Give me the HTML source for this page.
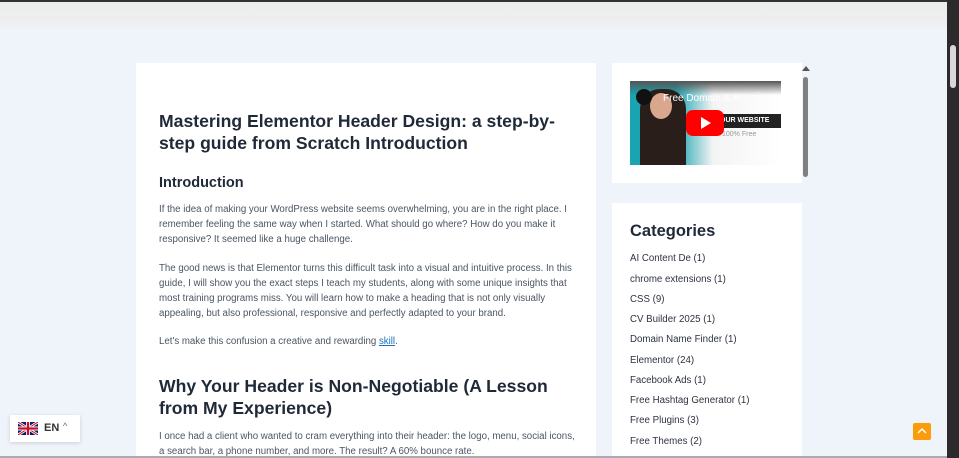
<!DOCTYPE html>
<html><head><meta charset="utf-8"><style>
*{margin:0;padding:0;box-sizing:border-box}
html,body{width:959px;height:458px;overflow:hidden}
body{background:#eff3fa;font-family:"Liberation Sans",sans-serif;position:relative}
.top{position:absolute;left:0;top:0;width:947px;height:30px;background:linear-gradient(#ececec,#eeeff1 80%,#eff3fa)}
.top:before{content:"";position:absolute;left:0;top:0;width:947px;height:2px;background:#333}
.sb{position:absolute;right:0;top:0;width:12px;height:458px;background:#2b2b2b}
.sb i{position:absolute;left:3px;top:45px;width:6px;height:43px;background:#d8d8d8;border-radius:3px}
.main{position:absolute;left:136px;top:63px;width:460px;height:395px;background:#fff;overflow:hidden}
.main .c{position:absolute;left:23px;width:420px;color:#1f2937}
h1{font-size:17.6px;line-height:22px;font-weight:bold}
h3{font-size:14.5px;font-weight:bold}
p{font-size:9.7px;line-height:15px;color:#4b5563}
a{color:#1a6fc0;text-decoration:underline}
.card{position:absolute;left:612px;width:190px;background:#fff;overflow:hidden}
.cat{position:absolute;left:18px;font-size:9.7px;color:#2d3340}
.lang{position:absolute;left:10px;top:415px;width:70px;height:27px;background:#fff;box-shadow:0 1px 4px rgba(0,0,0,.15);font-size:11px;font-weight:bold;color:#333}
.up{position:absolute;left:913px;top:423px;width:18px;height:17px;background:#fb9c0a;border-radius:2px}
</style></head><body>
<div class="top"></div>
<div class="main">
<div class="c" style="top:47px"><h1>Mastering Elementor Header Design: a step-by-step guide from Scratch Introduction</h1></div>
<div class="c" style="top:112px"><h3>Introduction</h3></div>
<div class="c" style="top:139px"><p>If the idea of making your WordPress website seems overwhelming, you are in the right place. I remember feeling the same way when I started. What should go where? How do you make it responsive? It seemed like a huge challenge.</p></div>
<div class="c" style="top:198px"><p>The good news is that Elementor turns this difficult task into a visual and intuitive process. In this guide, I will show you the exact steps I teach my students, along with some unique insights that most training programs miss. You will learn how to make a heading that is not only visually appealing, but also professional, responsive and perfectly adapted to your brand.</p></div>
<div class="c" style="top:271px"><p>Let's make this confusion a creative and rewarding <a>skill</a>.</p></div>
<div class="c" style="top:312px"><h1>Why Your Header is Non-Negotiable (A Lesson from My Experience)</h1></div>
<div class="c" style="top:366px"><p>I once had a client who wanted to cram everything into their header: the logo, menu, social icons, a search bar, a phone number, and more. The result? A 60% bounce rate.</p></div>
</div>
<div class="card" style="top:63px;height:120px">
<div style="position:absolute;left:18px;top:18px;width:151px;height:84px;background:linear-gradient(90deg,#1aa3b0 0,#1aa3b0 30%,#f4f4f4 55%,#fff);overflow:hidden">
<div style="position:absolute;left:0;top:0;width:151px;height:14px;background:linear-gradient(#555,rgba(0,0,0,0))"></div>
<div style="position:absolute;left:10px;top:8px;width:46px;height:76px;background:#2a1e1a;border-radius:20px 20px 0 0"></div>
<div style="position:absolute;left:20px;top:12px;width:22px;height:26px;background:#d9a78d;border-radius:50%"></div>
<div style="position:absolute;left:6px;top:8px;width:16px;height:16px;background:#111;border-radius:50%"></div>
<div style="position:absolute;left:33px;top:12px;color:#fff;font-size:10px">Free Domain &amp; H...</div>
<div style="position:absolute;left:123px;top:10px;color:#fff;font-size:10px">⋮</div>
<div style="position:absolute;left:84px;top:33px;width:67px;height:14px;background:#222;color:#fff;font-size:7px;font-weight:bold;line-height:14px;padding-left:6px">OUR WEBSITE</div>
<div style="position:absolute;left:92px;top:50px;color:#999;font-size:7px">100% Free</div>
<div style="position:absolute;left:56px;top:29px;width:38px;height:26px;background:#f00;border-radius:7px"></div>
<div style="position:absolute;left:71px;top:36px;width:0;height:0;border-left:10px solid #fff;border-top:6px solid transparent;border-bottom:6px solid transparent"></div>
</div>
</div>
<div style="position:absolute;left:802px;top:66px;width:0;height:0;border-left:4px solid transparent;border-right:4px solid transparent;border-bottom:5px solid #555"></div>
<div style="position:absolute;left:803px;top:77px;width:5px;height:100px;background:#808080;border-radius:3px"></div>
<div class="card" style="top:203px;height:255px">
<div style="position:absolute;left:18px;top:19px;font-size:16.5px;font-weight:bold;color:#1f2937">Categories</div>
<div class="cat" style="top:50px">AI Content De (1)</div>
<div class="cat" style="top:71px">chrome extensions (1)</div>
<div class="cat" style="top:91px">CSS (9)</div>
<div class="cat" style="top:111px">CV Builder 2025 (1)</div>
<div class="cat" style="top:131px">Domain Name Finder (1)</div>
<div class="cat" style="top:152px">Elementor (24)</div>
<div class="cat" style="top:172px">Facebook Ads (1)</div>
<div class="cat" style="top:192px">Free Hashtag Generator (1)</div>
<div class="cat" style="top:212px">Free Plugins (3)</div>
<div class="cat" style="top:233px">Free Themes (2)</div>
</div>
<div class="lang">
<svg style="position:absolute;left:8px;top:7px" width="20" height="13" viewBox="0 0 60 39"><rect width="60" height="39" fill="#012169"/><path d="M0 0L60 39M60 0L0 39" stroke="#fff" stroke-width="8"/><path d="M0 0L60 39M60 0L0 39" stroke="#c8102e" stroke-width="3"/><path d="M30 0V39M0 19.5H60" stroke="#fff" stroke-width="12"/><path d="M30 0V39M0 19.5H60" stroke="#c8102e" stroke-width="7"/></svg>
<span style="position:absolute;left:34px;top:7px">EN</span><span style="position:absolute;left:53px;top:6px;font-size:9px;font-weight:normal;color:#666">^</span>
</div>
<div class="up"><svg width="18" height="17"><path d="M5 10L9 6L13 10" fill="none" stroke="#fff" stroke-width="1.5"/></svg></div>
<div style="position:absolute;left:0;top:456px;width:947px;height:2px;background:#aaa"></div>
<div class="sb"><i></i></div>
</body></html>
